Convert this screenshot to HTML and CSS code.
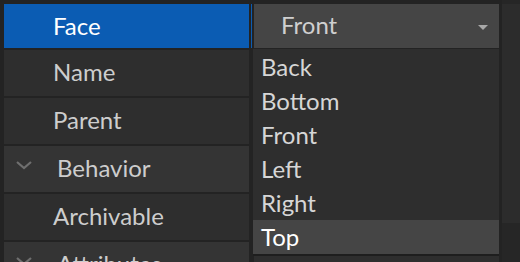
FILE: index.html
```html
<!DOCTYPE html>
<html>
<head>
<meta charset="utf-8">
<link rel="stylesheet" href="styles.css">
</head>
<body>
<div class="frame">
  <div class="props">
    <div class="row row-first selected">
      <div class="name">Face</div>
      <div class="value"><span class="value-text">Front</span><span class="caret"></span></div>
    </div>
    <div class="row">
      <div class="name">Name</div>
      <div class="value"></div>
    </div>
    <div class="row">
      <div class="name">Parent</div>
      <div class="value"></div>
    </div>
    <div class="row category">
      <div class="name"><svg class="chev" width="18" height="10" viewBox="0 0 18 10"><path d="M2 2 L9 8 L16 2" fill="none" stroke="#6f6f6f" stroke-width="2.2"/></svg>Behavior</div>
      <div class="value"></div>
    </div>
    <div class="row">
      <div class="name">Archivable</div>
      <div class="value"></div>
    </div>
    <div class="row category">
      <div class="name"><svg class="chev" width="18" height="10" viewBox="0 0 18 10"><path d="M2 2 L9 8 L16 2" fill="none" stroke="#6f6f6f" stroke-width="2.2"/></svg>Attributes</div>
      <div class="value"></div>
    </div>
  </div>
  <div class="scroll"><div class="thumb"></div></div>
  <ul class="menu">
    <li>Back</li>
    <li>Bottom</li>
    <li>Front</li>
    <li>Left</li>
    <li>Right</li>
    <li class="active">Top</li>
  </ul>
</div>
</body>
</html>
```
FILE: styles.css
```css
html, body {
  margin: 0;
  padding: 0;
  background: #232323;
  width: 520px;
  height: 262px;
  overflow: hidden;
  font-family: Lato, "Open Sans", sans-serif;
}
.frame {
  position: relative;
  display: flex;
  gap: 3px;
  height: 262px;
}
.props {
  width: 495px;
  padding: 4px 0 0 4px;
  display: flex;
  flex-direction: column;
  gap: 2px;
}
.row {
  display: grid;
  grid-template-columns: 245px 248px;
  column-gap: 2px;
  height: 46px;
  flex: none;
}
.row-first { height: 44px; }
.name {
  background: #2e2e2e;
  color: #cdcdcd;
  font-size: 24px;
  display: flex;
  align-items: center;
  padding-left: 49px;
  padding-bottom: 3px;
}
.value {
  background: #2e2e2e;
  border-left: 1px solid transparent;
  padding-left: 2px;
  background-clip: content-box;
  display: flex;
  align-items: center;
}
.selected .name {
  background: #0b5cb3;
  color: #ffffff;
  padding-bottom: 1px;
}
.selected .value {
  border-left-color: #0b5cb3;
  background-color: #454545;
}
.value-text {
  color: #cfcfcf;
  font-size: 24px;
  margin-left: 27px;
  margin-top: -4px;
  flex: 1;
}
.caret {
  width: 0;
  height: 0;
  border-left: 5px solid transparent;
  border-right: 5px solid transparent;
  border-top: 5px solid #a8a8a8;
  margin-right: 11px;
  margin-top: 2px;
}
.category .name {
  background: #343434;
  padding-left: 11px;
}
.chev {
  margin-right: 24px;
  margin-top: -6px;
}
.scroll {
  width: 18px;
  padding-top: 4px;
  background: #262626;
}
.thumb {
  height: 219px;
  background: #2c2c2c;
}
.menu {
  position: absolute;
  left: 253px;
  top: 49px;
  width: 246px;
  margin: 0;
  padding: 1px 0 0;
  list-style: none;
  background: #2e2e2e;
  border-bottom: 2px solid #1e1e1e;
}
.menu li {
  height: 34px;
  line-height: 34px;
  padding-left: 8px;
  font-size: 24px;
  color: #d6d6d6;
}
.menu li.active {
  background: #454545;
  color: #ffffff;
}
```
